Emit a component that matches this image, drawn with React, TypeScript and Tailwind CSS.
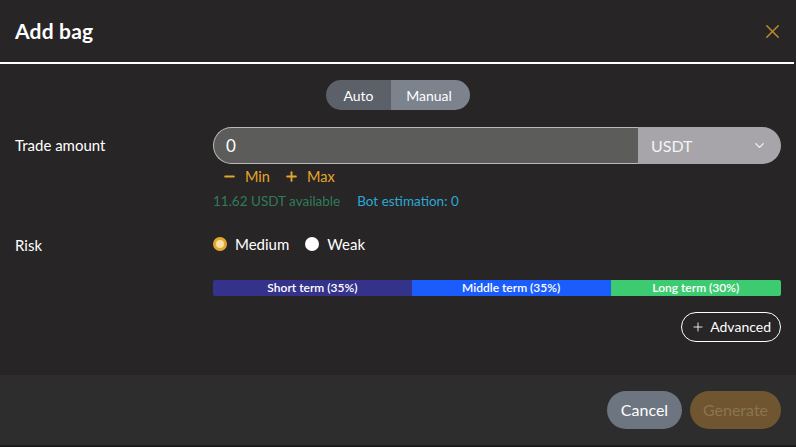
import React, { useState } from 'react';
import { ChevronDown, Minus, Plus, X } from 'lucide-react';

const SPLITS = [
  { label: 'Short term (35%)', width: 'w-[35%]', color: 'bg-[#35328c]' },
  { label: 'Middle term (35%)', width: 'w-[35%]', color: 'bg-[#1a5dfc]' },
  { label: 'Long term (30%)', width: 'w-[30%]', color: 'bg-[#3ccb70]' },
];

export default function App() {
  const [mode, setMode] = useState<'auto' | 'manual'>('manual');
  const [risk, setRisk] = useState<'medium' | 'weak'>('medium');

  return (
    <div className="w-[796px] h-[447px] flex flex-col bg-[#272526] text-white overflow-hidden"
      style={{ fontFamily: 'Lato, "Noto Sans", sans-serif' }}>
      <div className="h-[62px] flex items-center justify-between px-[15px] shrink-0">
        <h1 className="text-[21px] font-bold tracking-[0.2px]">Add bag</h1>
        <X className="w-[23px] h-[23px] text-[#b68a2c] mr-[-3px]" strokeWidth={1.6} />
      </div>
      <div className="h-[2px] bg-white mr-[2px] shrink-0" />

      <div className="flex-1 flex flex-col px-[15px]">
        <div className="flex justify-center mt-[16px]">
          <div className="flex h-[30px] rounded-full overflow-hidden text-[14px]">
            <button onClick={() => setMode('auto')}
              className={`w-[65px] ${mode === 'auto' ? 'bg-[#7c838d]' : 'bg-[#5c6169]'}`}>Auto</button>
            <button onClick={() => setMode('manual')}
              className={`w-[79px] pr-[3px] ${mode === 'manual' ? 'bg-[#7c838d]' : 'bg-[#5c6169]'}`}>Manual</button>
          </div>
        </div>

        <div className="grid grid-cols-[198px_1fr] mt-[17px]">
          <div className="text-[15px] pt-[7px]">Trade amount</div>
          <div>
            <div className="flex h-[37px]">
              <div className="flex-1 flex items-center bg-[#5c5c5b] border border-[#b9b9b9] border-r-0 rounded-l-full pl-[12px] text-[17px]">0</div>
              <div className="w-[143px] flex items-center justify-between bg-[#a7a5a9] rounded-r-full pl-[13px] pr-[14px] text-[16px] text-[#f4f4f4]">
                USDT
                <ChevronDown className="w-[15px] h-[15px]" strokeWidth={2} />
              </div>
            </div>
            <div className="flex items-center gap-[14px] mt-[2px] ml-[9px] text-[14.5px] text-[#e6a52a]">
              <span className="flex items-center gap-[8px]"><Minus className="w-[15px] h-[15px]" strokeWidth={3} />Min</span>
              <span className="flex items-center gap-[8px]"><Plus className="w-[15px] h-[15px]" strokeWidth={3} />Max</span>
            </div>
            <div className="flex gap-[17px] mt-[3px] text-[13.5px]">
              <span className="text-[#2f7d58]">11.62 USDT available</span>
              <span className="text-[#2ba9d6]">Bot estimation: 0</span>
            </div>
          </div>
        </div>

        <div className="grid grid-cols-[198px_1fr] mt-[21px]">
          <div className="text-[15px] pt-[2px]">Risk</div>
          <div className="flex items-center gap-[16px] text-[15px]">
            <label className="flex items-center gap-[8px] cursor-pointer" onClick={() => setRisk('medium')}>
              <span className={`w-[14px] h-[14px] rounded-full ${risk === 'medium' ? 'border-[3px] border-[#e3a830] bg-[#f6e0a0]' : 'bg-white'}`} />
              Medium
            </label>
            <label className="flex items-center gap-[8px] cursor-pointer" onClick={() => setRisk('weak')}>
              <span className={`w-[14px] h-[14px] rounded-full ${risk === 'weak' ? 'border-[3px] border-[#e3a830] bg-[#f6e0a0]' : 'bg-white'}`} />
              Weak
            </label>
          </div>
        </div>

        <div className="ml-[198px] mt-[23px] flex h-[16px] rounded-[2px] overflow-hidden text-[12px] font-semibold">
          {SPLITS.map(s => (
            <div key={s.label} className={`${s.width} ${s.color} flex items-center justify-center`}>{s.label}</div>
          ))}
        </div>

        <div className="flex justify-end mt-[16px]">
          <button className="h-[30px] flex items-center gap-[5px] px-[9px] border border-white rounded-full text-[14px]">
            <Plus className="w-[14px] h-[14px]" strokeWidth={1.5} />Advanced
          </button>
        </div>
      </div>

      <div className="h-[72px] shrink-0 bg-[#2e2d2e] flex items-start justify-end gap-[8px] px-[15px] pt-[16px] border-b-2 border-[#1c1b1c]">
        <button className="h-[38px] w-[75px] rounded-full bg-[#6d7580] text-[16px]">Cancel</button>
        <button className="h-[38px] w-[91px] rounded-full bg-[#6f5630] text-[16px] text-[#8a7550]">Generate</button>
      </div>
    </div>
  );
}
